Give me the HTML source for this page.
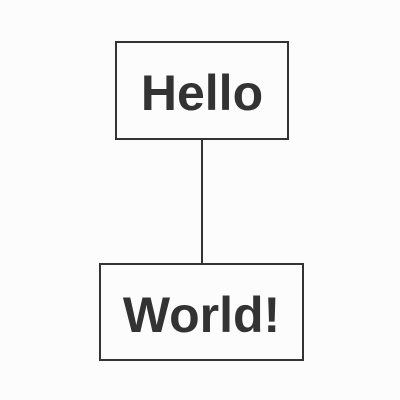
<!DOCTYPE html>
<html><head><style>
html,body{margin:0;padding:0;background:#fcfcfc;width:400px;height:400px;overflow:hidden}
.b{position:absolute;box-sizing:border-box;border:2px solid #333;background:#fcfcfc;font-family:"Liberation Sans",sans-serif;font-weight:bold;color:#333;font-size:50px;display:flex;align-items:center;justify-content:center;padding-top:5px}
.l{position:absolute;left:201px;top:139px;width:2px;height:126px;background:#333}
</style></head><body>
<div class="l"></div>
<div class="b" style="left:115px;top:41px;width:174px;height:99px">Hello</div>
<div class="b" style="left:99px;top:263px;width:205px;height:98px">World!</div>
</body></html>
